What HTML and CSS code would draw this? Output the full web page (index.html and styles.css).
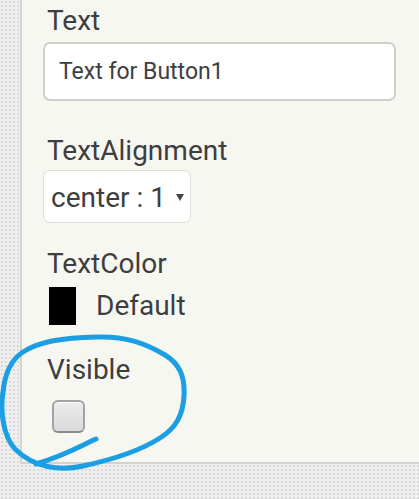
FILE: index.html
```html
<!DOCTYPE html>
<html>
<head>
<meta charset="utf-8">
<link rel="stylesheet" href="styles.css">
</head>
<body>
<div class="page">
  <div class="panel">
    <div class="prop prop-text">
      <div class="label">Text</div>
      <div class="textbox">Text for Button1</div>
    </div>
    <div class="prop prop-align">
      <div class="label">TextAlignment</div>
      <div class="select"><span class="select-value">center : 1</span><span class="arrow"></span></div>
    </div>
    <div class="prop prop-color">
      <div class="label">TextColor</div>
      <div class="color-row"><span class="swatch"></span><span class="color-name">Default</span></div>
    </div>
    <div class="prop prop-visible">
      <div class="label">Visible</div>
      <div class="checkbox"></div>
    </div>
  </div>
  <svg class="annotation" width="419" height="499" viewBox="0 0 419 499">
    <path d="M3,392 C5,372 12,359 23,352 C40,341 62,338 97,337 C125,336 145,343 165,355 C180,364 185,377 184,396 C183,415 176,428 160,438 C140,451 115,459 83,466 C60,471 34,468 15,449 C3,436 0,410 3,392" fill="none" stroke="#1b9fe2" stroke-width="5" stroke-linecap="round" stroke-linejoin="round"/>
    <path d="M96,439 C80,446 66,455 36,464" fill="none" stroke="#1b9fe2" stroke-width="5" stroke-linecap="round"/>
  </svg>
</div>
</body>
</html>
```
FILE: styles.css
```css
html, body {
  margin: 0;
  padding: 0;
}
body {
  width: 419px;
  height: 499px;
  overflow: hidden;
  font-family: Roboto, "Noto Sans", sans-serif;
  color: #3e3e3e;
  background-color: #efefef;
  background-image: radial-gradient(circle, #d9d9d9 0.9px, transparent 1.2px);
  background-size: 4px 4px;
}
.page {
  position: relative;
  width: 419px;
  height: 499px;
}
.panel {
  margin-left: 20px;
  height: 464px;
  box-sizing: border-box;
  background: #f7f7f2;
  border-left: 2px solid #d3d3d0;
  border-bottom: 2px solid #d3d3d0;
  padding: 5px 0 0 25px;
  display: flex;
  flex-direction: column;
}
.label {
  font-size: 28px;
  line-height: 32px;
  height: 32px;
}
.textbox {
  margin: 5px 0 0 -4px;
  width: 353px;
  height: 59px;
  box-sizing: border-box;
  background: #fff;
  border: 2px solid #cfcfcc;
  border-radius: 7px;
  font-size: 23px;
  line-height: 55px;
  padding-left: 14px;
}
.prop-align {
  margin-top: 34px;
}
.select {
  margin: 3px 0 0 -4px;
  width: 148px;
  height: 53px;
  box-sizing: border-box;
  background: #fff;
  border: 1px solid #dcdcd8;
  border-radius: 7px;
  display: flex;
  align-items: center;
  padding: 2px 0 0 7px;
  font-size: 28px;
}
.arrow {
  margin-left: 10px;
  width: 0;
  height: 0;
  border-left: 4px solid transparent;
  border-right: 4px solid transparent;
  border-top: 7px solid #444;
}
.prop-color {
  margin-top: 25px;
}
.color-row {
  margin-top: 7px;
  display: flex;
  align-items: center;
}
.swatch {
  margin-left: 2px;
  width: 27px;
  height: 38px;
  background: #000;
}
.color-name {
  margin-left: 20px;
  font-size: 28px;
  line-height: 32px;
}
.prop-visible {
  margin-top: 29px;
}
.checkbox {
  margin: 14px 0 0 5px;
  width: 33px;
  height: 33px;
  box-sizing: border-box;
  border: 2px solid #a3a3a3;
  border-bottom-color: #8c8c8c;
  border-radius: 6px;
  background: linear-gradient(#ececec, #dadada);
  box-shadow: inset 0 1px 0 #fafafa;
}
.annotation {
  position: absolute;
  left: 0;
  top: 0;
  pointer-events: none;
}
```
